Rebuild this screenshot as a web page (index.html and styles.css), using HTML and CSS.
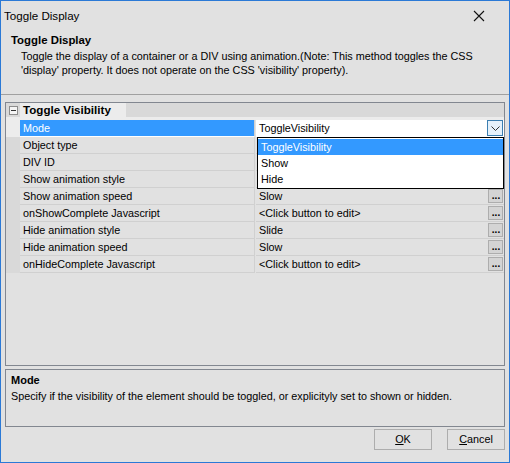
FILE: index.html
```html
<!DOCTYPE html>
<html lang="en">
<head>
    <meta charset="UTF-8">
    <title>Toggle Display</title>
    <link rel="stylesheet" href="styles.css">
</head>
<body>

<div class="window">
    <div class="titlebar">
        <span class="caption">Toggle Display</span>
        <span class="close">
            <svg width="12" height="12" viewBox="0 0 12 12"><path d="M1 1L11 11M11 1L1 11" stroke="#111" stroke-width="1.1" fill="none"/></svg>
        </span>
    </div>

    <div class="header">
        <h3>Toggle Display</h3>
        <p>Toggle the display of a container or a DIV using animation.(Note: This method toggles the CSS 'display' property. It does not operate on the CSS 'visibility' property).</p>
    </div>

    <div class="body">
        <div class="grid">
            <div class="category">
                <span class="gutter"><span class="expander"></span></span>
                <span class="catName">Toggle Visibility</span>
            </div>

            <div class="row selected">
                <span class="gutter"></span>
                <span class="name">Mode</span>
                <span class="value edit">ToggleVisibility
                    <span class="dropBtn">
                        <svg width="9" height="5" viewBox="0 0 9 5"><path d="M0.5 0.5L4.5 4.5L8.5 0.5" stroke="#333" fill="none"/></svg>
                    </span>
                </span>
            </div>
            <div class="row"><span class="gutter"></span><span class="name">Object type</span><span class="value"></span></div>
            <div class="row"><span class="gutter"></span><span class="name">DIV ID</span><span class="value"></span></div>
            <div class="row"><span class="gutter"></span><span class="name">Show animation style</span><span class="value"></span></div>
            <div class="row"><span class="gutter"></span><span class="name">Show animation speed</span><span class="value">Slow<span class="dots">...</span></span></div>
            <div class="row"><span class="gutter"></span><span class="name">onShowComplete Javascript</span><span class="value">&lt;Click button to edit&gt;<span class="dots">...</span></span></div>
            <div class="row"><span class="gutter"></span><span class="name">Hide animation style</span><span class="value">Slide<span class="dots">...</span></span></div>
            <div class="row"><span class="gutter"></span><span class="name">Hide animation speed</span><span class="value">Slow<span class="dots">...</span></span></div>
            <div class="row"><span class="gutter"></span><span class="name">onHideComplete Javascript</span><span class="value">&lt;Click button to edit&gt;<span class="dots">...</span></span></div>

            <!-- open list of the Mode editor -->
            <div class="dropList">
                <div class="item active">ToggleVisibility</div>
                <div class="item">Show</div>
                <div class="item">Hide</div>
            </div>
        </div>

        <div class="desc">
            <h4>Mode</h4>
            <p>Specify if the visibility of the element should be toggled, or explicityly set to shown or hidden.</p>
        </div>

        <div class="buttons">
            <span class="btn"><u>O</u>K</span>
            <span class="btn"><u>C</u>ancel</span>
        </div>
    </div>
</div>

</body>
</html>
```

FILE: styles.css
```css
* {
    padding: 0;
    margin: 0;
    box-sizing: border-box;
}
body {
    font-family: "Liberation Sans", Arial, sans-serif;
    font-size: 10.8px;
    color: #000;
    background: #fff;
}
.window {
    width: 510px;
    height: 463px;
    border: 1px solid #2b79d6;
    background: #e1e1e1;
    display: flex;
    flex-direction: column;
}
.titlebar {
    height: 29px;
    display: flex;
    align-items: center;
    justify-content: space-between;
    padding: 0 24px 0 3px;
    font-size: 11.6px;
}
.close {
    display: flex;
}
.header {
    height: 65px;
    border-bottom: 1px solid #a0a0a0;
    padding: 3px 10px 0 10px;
}
.header h3 {
    font-size: 11.4px;
    font-weight: bold;
    line-height: 15px;
}
.header p {
    padding-left: 10px;
    line-height: 14px;
    margin-top: 1px;
}
.body {
    padding: 7px 4px 0 4px;
    flex: 1;
    display: flex;
    flex-direction: column;
}
.grid {
    position: relative;
    height: 264px;
    border: 1px solid #828790;
    background: #e1e1e1;
}
.category {
    display: flex;
    height: 14px;
    background: #d9d9d9;
    border-bottom: 3px solid #ececec;
    box-sizing: content-box;
}
.gutter {
    width: 14px;
    flex: none;
    display: flex;
    align-items: center;
    justify-content: center;
    background: #d9d9d9;
}
.expander {
    width: 9px;
    height: 9px;
    border: 1px solid #8c8c8c;
    background: #f4f4f4;
    position: relative;
}
.expander:after {
    content: "";
    position: absolute;
    left: 1px;
    top: 3px;
    width: 5px;
    height: 1px;
    background: #333;
}
.catName {
    font-weight: bold;
    font-size: 11.6px;
    line-height: 14px;
    background: #ececec;
    padding: 0 4px 0 3px;
    width: 106px;
}
.row {
    display: flex;
    height: 17px;
}
.row .name {
    width: 235px;
    flex: none;
    padding-left: 3px;
    line-height: 16px;
    border-bottom: 1px solid #d0d0d0;
    border-right: 1px solid #d0d0d0;
}
.row .value {
    flex: 1;
    display: flex;
    justify-content: space-between;
    align-items: flex-start;
    padding-left: 3px;
    line-height: 16px;
    border-bottom: 1px solid #d0d0d0;
    margin-left: 1px;
}
.row.selected .gutter {
    background: #ececec;
}
.row.selected .name {
    background: #3399ff;
    color: #fff;
    border-bottom-color: #fff;
}
.row .edit {
    background: #fff;
    padding-right: 1px;
    border-bottom-color: #fff;
}
.dropBtn {
    width: 16px;
    height: 16px;
    border: 1px solid #3c7fb1;
    background: #e5f1fb;
    display: flex;
    align-items: center;
    justify-content: center;
}
/* ellipsis button of the text editors */
.dots {
    width: 15px;
    height: 14px;
    margin: 1px 1px 0 0;
    border: 1px solid #adadad;
    background: #d4d4d4;
    font-weight: bold;
    font-size: 10px;
    line-height: 12px;
    padding-left: 1px;
    text-align: center;
    letter-spacing: 0;
}
.dropList {
    position: absolute;
    left: 251px;
    top: 34px;
    width: 247px;
    border: 1px solid #000;
    background: #fff;
    padding: 1px 0;
}
.dropList .item {
    height: 16px;
    line-height: 16px;
    padding-left: 3px;
}
.dropList .active {
    background: #3399ff;
    color: #fff;
}
.desc {
    margin-top: 3px;
    height: 58px;
    border: 1px solid #828790;
    background: #e1e1e1;
    padding: 4px 5px;
}
.desc h4 {
    font-size: 11px;
    font-weight: bold;
    line-height: 13px;
}
.desc p {
    line-height: 16px;
    margin-top: 1px;
}
.buttons {
    display: flex;
    justify-content: flex-end;
    gap: 15px;
    margin-top: 2px;
}
.btn {
    width: 58px;
    height: 21px;
    border: 1px solid #adadad;
    background: #e1e1e1;
    text-align: center;
    line-height: 19px;
}
.btn u {
    text-decoration: underline;
}
```
